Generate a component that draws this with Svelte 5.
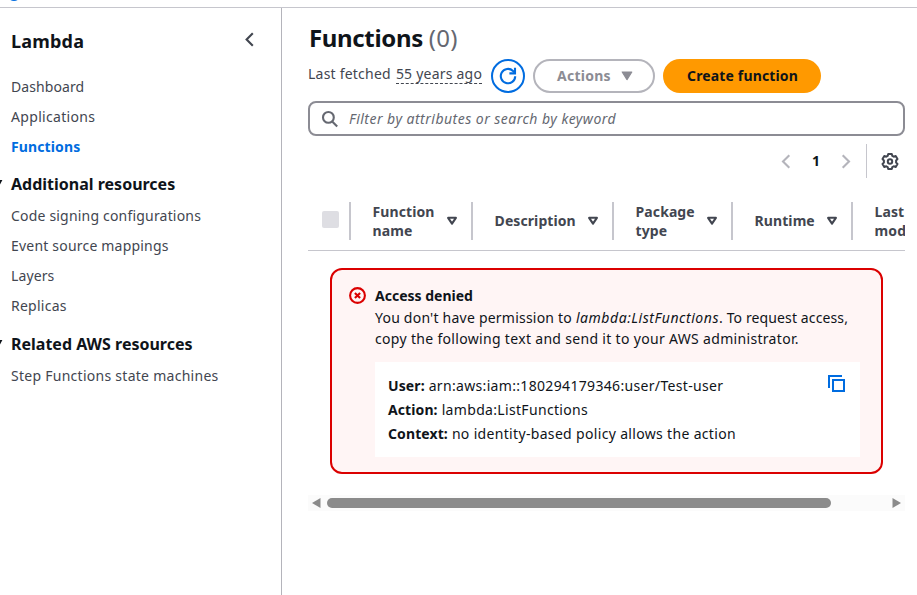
<script>
  const mainLinks = [
    { label: 'Dashboard', ls: 0.08 },
    { label: 'Applications', ls: 0.32 },
    { label: 'Functions', ls: 0.12, active: true }
  ];
  const sections = [
    {
      title: 'Additional resources',
      links: [
        { label: 'Code signing configurations', ls: 0.19 },
        { label: 'Event source mappings', ls: 0.2 },
        { label: 'Layers', ls: 0.1 },
        { label: 'Replicas', ls: 0.25 }
      ]
    },
    { title: 'Related AWS resources', links: [{ label: 'Step Functions state machines', ls: 0.27 }] }
  ];
  const columns = [
    { label: 'Function name', width: 122 },
    { label: 'Description', width: 141 },
    { label: 'Package type', width: 119 },
    { label: 'Runtime', width: 120 },
    { label: 'Last modified', width: 130 }
  ];
</script>

{#snippet link(item)}
  <li><a href="#top" class:active={item.active} style="letter-spacing:{item.ls}px">{item.label}</a></li>
{/snippet}

<div class="page">
  <div class="topbar"><span class="dot"></span></div>
  <div class="body">
    <nav class="side">
      <div class="side-head">
        <h2>Lambda</h2>
        <svg width="18" height="18" viewBox="0 0 18 18"><path d="M12.8 3.2 6.6 9.5l6.2 6.3" fill="none" stroke="#424650" stroke-width="2.1" /></svg>
      </div>
      <ul>
        {#each mainLinks as item}{@render link(item)}{/each}
      </ul>
      {#each sections as section}
        <div class="section">
          <svg class="caret" width="3" height="6" viewBox="0 0 3 6"><path d="M0 0h2.4L0 4.4z" fill="#0f141a" /></svg>
          <h3>{section.title}</h3>
        </div>
        <ul>
          {#each section.links as item}{@render link(item)}{/each}
        </ul>
      {/each}
    </nav>

    <main>
      <h1>Functions <span>(0)</span></h1>
      <div class="actions">
        <div class="fetched"><span>Last fetched</span><span class="ago">55 years ago</span></div>
        <button class="refresh" aria-label="Refresh">
          <svg width="18" height="18" viewBox="0 0 18 18" fill="none" stroke="#006ce0" stroke-width="2.1"><path d="M16.2 9.2A7.2 7.2 0 1 1 14 3.9L16 5.8" /><path d="M16 .8v5.6h-5.6" /></svg>
        </button>
        <button class="menu">Actions
          <svg width="12" height="10" viewBox="0 0 12 10"><path d="M1.2 1h9.6L6 8.6z" fill="#8c8c94" stroke="#8c8c94" stroke-width="1.2" stroke-linejoin="round" /></svg>
        </button>
        <button class="create">Create function</button>
      </div>
      <div class="search">
        <svg width="18" height="18" viewBox="0 0 18 18" fill="none" stroke="#656871" stroke-width="2.1"><circle cx="7.4" cy="7.4" r="5.4" /><path d="m11.2 11.4 5 5" /></svg>
        <span>Filter by attributes or search by keyword</span>
      </div>
      <div class="pager">
        <svg width="18" height="18" viewBox="0 0 18 18"><path d="M12.3 3.3 6 9.5l6.3 6.2" fill="none" stroke="#b4b4bb" stroke-width="2.1" /></svg>
        <b>1</b>
        <svg width="18" height="18" viewBox="0 0 18 18"><path d="M5.7 3.3 12 9.5l-6.3 6.2" fill="none" stroke="#b4b4bb" stroke-width="2.1" /></svg>
        <span class="rule"></span>
        <svg width="18" height="18" viewBox="0 0 18 18" fill="none" stroke="#424650" stroke-width="2" stroke-linejoin="round"><circle cx="9" cy="9.5" r="2.2" /><path d="M7.2 2.1h3.6l.5 1.8 1.4.8 2-.7 1.8 3.1-1.4 1.4v2l1.4 1.4-1.8 3.1-2-.7-1.4.8-.5 1.8H7.2l-.5-1.8-1.4-.8-2 .7-1.8-3.1 1.4-1.4v-2L1.500 7.100l1.800-3.100 2 .7 1.400-.8z" /></svg>
      </div>

      <div class="thead">
        <div class="pick"><span></span></div>
        {#each columns as col}
          <div class="col" style="width:{col.width}px">
            <span class:single={!col.label.includes(' ')}>{#each col.label.split(' ') as word, i}{#if i}<br />{/if}{word}{/each}</span>
            <svg width="12" height="10" viewBox="0 0 12 10"><path d="M2.1 1.800h7.800L6 7.700z" fill="none" stroke="#424650" stroke-width="2.1" stroke-linejoin="round" /></svg>
          </div>
        {/each}
      </div>

      <div class="alert">
        <svg width="18" height="18" viewBox="0 0 18 18" fill="none" stroke="#db0000" stroke-width="2.1"><circle cx="8.5" cy="8.5" r="7.4" /><path d="m5.9 5.900 5.200 5.200m0-5.200-5.200 5.200" /></svg>
        <div class="alert-body">
          <div class="title">Access denied</div>
          <p><span class="l1">You don't have permission to{' '}</span><i>lambda:ListFunctions</i><span class="l2">. To request access,</span><br /><span class="l3">copy the following text and send it to your AWS administrator.</span></p>
          <div class="detail">
            <div>
              <div><b>User:</b> arn:aws:iam::180294179346:user/Test-user</div>
              <div><b>Action:</b> lambda:ListFunctions</div>
              <div><b>Context:</b> no identity-based policy allows the action</div>
            </div>
            <svg width="18" height="18" viewBox="0 0 18 18" fill="none" stroke="#006ce0" stroke-width="2"><path d="M14 2H1v12" /><path d="M5 6h11v11H5z" /></svg>
          </div>
        </div>
      </div>

      <div class="scroll">
        <svg width="9" height="10" viewBox="0 0 9 10"><path d="M8.500 0v10L0 5z" fill="#8b8b8b" /></svg>
        <div class="track"><span></span></div>
        <svg width="9" height="10" viewBox="0 0 9 10"><path d="M.5 0v10L9 5z" fill="#8b8b8b" /></svg>
      </div>
    </main>
  </div>
</div>

<style>
  .page { width: 917px; height: 595px; overflow: hidden; background: #fff; color: #0f141a; font: 14px/20px "Noto Sans", sans-serif; display: flex; flex-direction: column; }
  .page *, .page { box-sizing: border-box; }
  svg { display: block; flex: none; }
  h1, h2, h3, p, ul { margin: 0; padding: 0; }
  .topbar { height: 8px; flex: none; border-bottom: 1px solid #c6c6cd; overflow: hidden; }
  .dot { display: block; width: 14px; height: 14px; margin: -13px 0 0 7px; border-radius: 50%; background: #006ce0; }
  .body { flex: 1; display: flex; min-height: 0; }
  .side { width: 282px; flex: none; border-right: 1px solid #b4b4bb; }
  .side-head { height: 64px; display: flex; justify-content: space-between; align-items: flex-start; padding: 22px 23px 0 11px; }
  h2 { font-size: 18px; line-height: 22px; letter-spacing: 0.2px; }
  ul { list-style: none; }
  li { height: 30px; line-height: 30px; padding-left: 11px; }
  a { color: #424650; text-decoration: none; }
  a.active { color: #006ce0; font-weight: 700; }
  .section { display: flex; align-items: center; height: 33px; margin-top: 6px; }
  ul ~ ul + .section { margin-top: 7px; }
  .section .caret { margin: -3px 8px 0 0; }
  h3 { font-size: 16px; line-height: 33px; }

  main { flex: 1; min-width: 0; padding: 13px 12px 0 26px; }
  h1 { font-size: 24px; line-height: 34px; padding-left: 1px; letter-spacing: -0.35px; }
  h1 span { font-weight: 400; color: #656871; letter-spacing: 0.3px; }
  .actions { display: flex; align-items: center; gap: 8px; height: 34px; margin-top: 4px; }
  .fetched { display: flex; gap: 5px; width: 175px; color: #424650; line-height: 18px; letter-spacing: 0.22px; white-space: nowrap; margin-top: -4px; }
  .ago { border-bottom: 1px dashed #424650; }
  button { height: 34px; padding: 0; font: 700 14px/20px "Noto Sans", sans-serif; border-radius: 17px; display: flex; align-items: center; justify-content: center; }
  .refresh { width: 34px; border: 2px solid #006ce0; background: #fff; }
  .menu { width: 122px; padding-left: 2px; border: 2px solid #b4b4bb; background: #fff; color: #8c8c94; gap: 10px; letter-spacing: 0.25px; }
  .create { width: 158px; padding-left: 1px; border: 0; background: #ff9900; color: #0f141a; letter-spacing: 0.15px; }
  .search { height: 35px; margin-top: 8px; border: 2px solid #8c8c94; border-radius: 8px; display: flex; align-items: center; gap: 10px; padding-left: 11px; color: #656871; font-style: italic; letter-spacing: 0.48px; }
  .pager { display: flex; align-items: center; justify-content: flex-end; height: 34px; margin-top: 8px; padding-right: 6px; }
  .pager b { width: 42px; text-align: center; }
  .rule { width: 1px; height: 34px; background: #c6c6cd; margin: 0 14px 0 11px; }
  .thead { display: flex; overflow: hidden; height: 61px; margin-top: 12px; padding-top: 12px; border-bottom: 1px solid #c6c6cd; color: #424650; font-weight: 700; line-height: 19px; }
  .pick { width: 41px; flex: none; height: 38px; padding: 9px 0 0 14px; }
  .pick span { display: block; width: 17px; height: 17px; border-radius: 2px; background: #dedee3; }
  .col { flex: none; display: flex; align-items: center; justify-content: space-between; height: 38px; border-left: 2px solid #c6c6cd; padding: 0 13px 0 21.6px; letter-spacing: 0.08px; }
  .single { padding-bottom: 2px; }
  .alert { display: flex; gap: 8px; width: 553px; height: 206px; margin: 17px 0 0 22px; padding: 17px 21px 0 17px; border: 2px solid #db0000; border-radius: 12px; background: #fff5f5; }
  .alert-body { flex: 1; line-height: 21px; white-space: nowrap; }
  .alert-body p { height: 42px; }
  .title { font-weight: 700; margin: -2px 0 1px; }
  .l1 { letter-spacing: 0.22px; white-space: pre; }
  i { letter-spacing: 0.55px; }
  .l2 { letter-spacing: 0.12px; }
  .l3 { letter-spacing: 0.32px; }
  .detail { display: flex; justify-content: space-between; height: 95px; margin-top: 13px; padding: 12px 14px 0 13px; background: #fff; line-height: 24px; letter-spacing: 0.33px; }
  .detail b { letter-spacing: 0.1px; }
  .scroll { display: flex; align-items: center; height: 16px; margin: 21px 0 0; padding: 0 4px; background: #fbfbfb; gap: 6px; }
  .track { flex: 1; }
  .track span { display: block; width: 504px; height: 10px; border-radius: 5px; background: #8b8b8b; }
</style>
